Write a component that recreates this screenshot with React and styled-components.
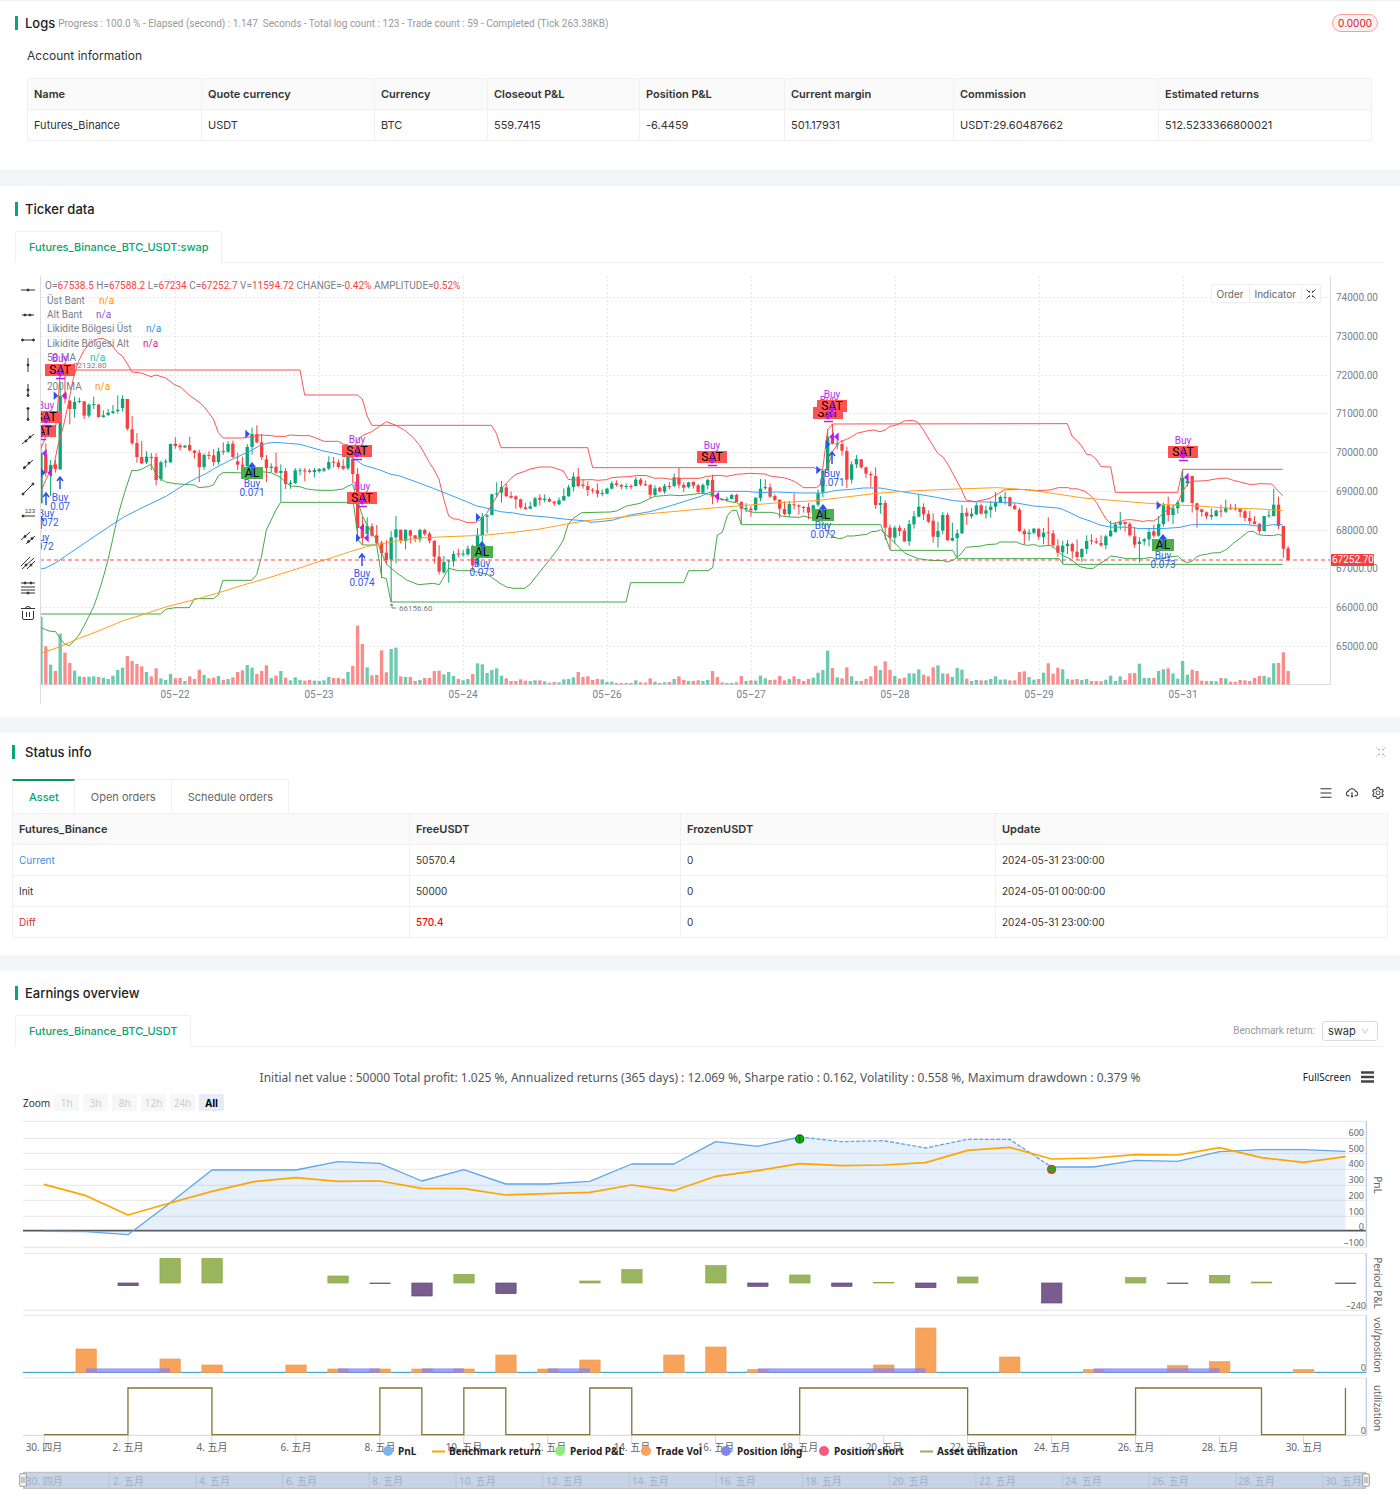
import React from "react";

import styled, { createGlobalStyle } from "styled-components";
import {
  AiOutlineMenu,
  AiOutlineCloudDownload,
  AiOutlineSetting,
  AiOutlineDown,
} from "react-icons/ai";

const GlobalStyle = createGlobalStyle`
  * {
    box-sizing: border-box;
  }

  body {
    margin: 0;
    background: #fff;
    color: #333;
    font-family: Inter, "Noto Sans CJK SC", sans-serif;
    font-size: 11px;
  }

  button,
  select {
    font: inherit;
    cursor: pointer;
  }
`;

const Page = styled.main`
  display: flex;
  flex-direction: column;
  gap: 16px;
  background: #f4f5f7;
  border-top: 1px solid #f0f0f2;
`;

const Section = styled.section`
  background: #fff;
  padding: ${(props) => props.$pad};
`;

const Header = styled.header`
  display: flex;
  align-items: center;
  height: 18px;
  padding-right: ${(props) => (props.$wide ? "0" : "7px")};

  h2 {
    margin: 0 3px 0 0;
    border-left: 3px solid #0ba678;
    padding-left: ${(props) => (props.$wide ? "10px" : "7px")};
    font-size: 13px;
    line-height: 14px;
    font-weight: 500;
    color: #222;
  }

  p {
    margin: 0;
    flex: 1;
    font-family: Roboto, sans-serif;
    font-size: 10px;
    color: #999;
    white-space: pre;
  }
`;

const Tag = styled.span`
  border: 1px solid #ff9f9c;
  border-radius: 9px;
  background: #fff1f0;
  color: #cf1322;
  font-size: 10px;
  line-height: 16px;
  padding: 0 5px;
`;

const SubTitle = styled.h3`
  margin: 14px 12px 12px;
  font-size: 12px;
  line-height: 20px;
  font-weight: 400;
`;

const TableWrap = styled.div`
  margin: ${(props) => props.$margin || "0"};
`;

const Table = styled.table`
  width: 100%;
  table-layout: fixed;
  border-collapse: collapse;
  font-size: ${(props) => (props.$small ? "10px" : "11px")};

  th,
  td {
    height: 31px;
    padding: 0 6px;
    text-align: left;
    border: 1px solid #f0f0f0;
  }

  th {
    background: #fafafa;
    font-size: 11px;
    font-weight: 600;
  }
`;

const Value = styled.span`
  color: ${(props) => props.$color};
  font-weight: ${(props) => (props.$strong ? 500 : 400)};
`;

const CardTabs = styled.div`
  display: flex;
  justify-content: space-between;
  margin-top: 13px;
  border-bottom: 1px solid #f0f0f0;
`;

const CardTab = styled.button`
  height: 32px;
  margin-bottom: -1px;
  padding: 0 12px 0 13px;
  border: 1px solid #f0f0f0;
  border-bottom-color: #fff;
  border-radius: 3px 3px 0 0;
  background: #fff;
  color: #08a36f;
  font-weight: 500;
`;

const LineTabs = styled.div`
  display: flex;
  margin-top: 18px;
  align-items: stretch;
  height: 34px;
`;

const LineTab = styled.button`
  border: 1px solid #f0f0f0;
  border-bottom: 0;
  border-left-width: ${(props) => (props.$active ? "1px" : "0")};
  border-top: ${(props) => (props.$active ? "2px solid #0b9468" : "1px solid #f0f0f0")};
  background: #fff;
  padding: 0 15px 0 16px;
  color: ${(props) => (props.$active ? "#08a36f" : "#666")};
  font-weight: ${(props) => (props.$active ? 500 : 400)};
`;

const IconRow = styled.div`
  display: flex;
  flex: 1;
  justify-content: flex-end;
  align-items: center;
  gap: 12px;
  padding: 0 2px 6px 0;
`;

const IconButton = styled.button`
  display: flex;
  border: 0;
  padding: 0;
  background: none;
  margin-left: ${(props) => (props.$end ? "auto" : "0")};
  color: ${(props) => props.$color || "#333"};
`;

const TickerBody = styled.div`
  position: relative;
  display: flex;
  align-items: flex-start;
  margin-top: 7px;
`;

const ToolBar = styled.div`
  display: flex;
  flex-direction: column;
  width: 25px;
  height: 347px;
  margin-top: 8px;

  button {
    flex: 1;
    display: flex;
    align-items: center;
    justify-content: center;
    border: 0;
    padding: 0;
    background: none;
  }
`;

const Chart = styled.svg`
  display: block;
  flex: 1;
  min-width: 0;
  width: 100%;
  margin-top: ${(props) => props.$top || "0"};
`;

const ChartMenu = styled.div`
  position: absolute;
  top: 14px;
  right: 64px;
  display: flex;
  height: 19px;
  border: 1px solid #eee;
  border-radius: 2px;
  background: #fff;

  button {
    display: flex;
    align-items: center;
    border: 0;
    border-right: 1px solid #eee;
    background: none;
    padding: 0 5px;
    font-size: 10px;
    line-height: 14px;
    color: #666;
  }

  button:last-child {
    border-right: 0;
    padding: 0 3px;
    color: #444;
  }
`;

const Benchmark = styled.label`
  display: flex;
  align-items: center;
  gap: 7px;
  padding-right: 7px;
  font-family: Roboto, sans-serif;
  font-size: 10px;
  color: #999;
`;

const SelectBox = styled.span`
  display: flex;
  align-items: center;
  width: 56px;
  height: 20px;
  border: 1px solid #d9d9d9;
  border-radius: 3px;
  padding-right: 7px;
  color: #bbb;

  select {
    appearance: none;
    flex: 1;
    min-width: 0;
    border: 0;
    padding: 0 0 0 5px;
    background: none;
    font-family: Inter, sans-serif;
    font-size: 11px;
    color: #333;
  }
`;

const TitleRow = styled.div`
  display: grid;
  grid-template-columns: 1fr auto 1fr;
  align-items: center;
  height: 24px;
  margin-top: 18px;
  font-family: "Noto Sans", sans-serif;
  color: #555;

  p {
    grid-column: 2;
    margin: 0;
    font-size: 12px;
  }
`;

const TitleActions = styled.div`
  display: flex;
  justify-content: flex-end;
  align-items: center;
  gap: 10px;
  padding-right: 11px;

  button {
    display: flex;
    border: 0;
    padding: 0;
    background: none;
    color: #222;
    font-size: 10px;
  }
`;

const ZoomRow = styled.div`
  display: flex;
  align-items: center;
  height: 17px;
  margin-top: 5px;
  padding-left: 8px;
  gap: 4px;
  font-family: "Noto Sans", sans-serif;
  font-size: 10px;

  button {
    width: 25px;
    height: 17px;
    border: 0;
    padding: 0;
    border-radius: 1px;
    background: #f7f7f7;
    color: #ccc;
  }

  button:last-child {
    background: #e6ebf5;
    color: #000;
    font-weight: 700;
  }
`;

const account = [
  ["Name", "Futures_Binance", 174],
  ["Quote currency", "USDT", 173],
  ["Currency", "BTC", 113],
  ["Closeout P&L", "559.7415", 152],
  ["Position P&L", "-6.4459", 145],
  ["Current margin", "501.17931", 169],
  ["Commission", "USDT:29.60487662", 205],
  ["Estimated returns", "512.5233366800021", 213],
];

const assets = [
  ["Current", "50570.4", "0", "2024-05-31 23:00:00", "#3a8ee6", "#333"],
  ["Init", "50000", "0", "2024-05-01 00:00:00", "#333", "#333"],
  ["Diff", "570.4", "0", "2024-05-31 23:00:00", "#d6302a", "#f00a0a"],
];

// direction, high, body top, body bottom, low, volume top (thirds of a pixel)
const candleData = `
g520 550 700 700 1040,r520 555 608 620 1129,g570 585 605 678 1184,r570 583 597 608 1203,g340 378 598 600 1091,r310 370 385 400 1148,
r390 392 417 463 1179,g380 396 417 443 1202,g383 393 396 400 1219,r393 394 437 447 1221,g400 404 437 443 1220,g380 402 405 417 1219,
r402 404 441 443 1221,g421 436 441 443 1223,g417 428 435 438 1227,g405 424 429 432 1217,g376 419 423 430 1200,g376 387 414 424 1193,
r387 387 476 482 1158,r438 478 520 524 1173,r489 519 561 578 1182,r513 561 580 582 1189,g544 560 577 582 1206,r549 561 564 600 1219,
r549 561 630 646 1195,g572 577 627 634 1225,g567 574 577 592 1230,g521 522 577 578 1212,r502 521 528 536 1225,r520 526 532 542 1224,
g525 527 532 534 1233,r500 525 541 544 1219,r540 542 549 566 1227,r540 548 591 636 1199,g550 555 591 600 1215,r544 555 558 568 1225,
r537 556 576 588 1223,g533 544 576 584 1218,r517 543 546 555 1230,g514 522 545 549 1227,r512 521 561 565 1222,r549 574 584 600 1206,
r560 584 590 596 1201,g522 531 588 592 1185,g473 492 531 554 1193,r466 492 517 520 1212,r491 517 561 570 1203,r555 568 594 636 1186,
g580 590 594 606 1224,r547 590 608 611 1217,g583 603 609 695 1203,r594 603 642 657 1223,g630 638 642 656 1231,g594 601 639 642 1222,
g594 601 604 616 1230,r594 601 604 634 1232,r596 602 606 610 1230,g594 600 606 622 1232,g594 597 604 608 1233,g592 596 602 606 1231,
g559 576 596 600 1221,r561 575 578 592 1224,r568 577 591 596 1224,r568 588 596 601 1226,g540 555 595 600 1206,r560 566 612 640 1188,
r594 612 774 800 1067,r740 774 804 825 1122,g742 768 792 797 1192,r760 769 797 800 1216,r765 796 820 825 1215,r812 818 850 924 1141,
r810 848 870 884 1207,g783 802 869 996 1137,g738 778 802 880 1133,r779 779 812 820 1219,g779 779 813 838 1221,r779 781 797 820 1221,
r795 796 806 816 1233,g776 780 808 817 1230,r776 780 792 797 1224,r785 791 812 820 1224,r810 813 860 880 1203,r825 860 905 914 1202,
g858 876 907 911 1213,g870 872 875 938 1206,g843 852 874 890 1218,r836 850 853 862 1227,g840 851 854 860 1231,g826 836 853 858 1227,
r824 862 886 900 1212,g774 794 884 890 1180,g729 741 795 830 1183,g732 736 740 790 1209,g671 673 735 736 1200,g637 670 673 683 1195,
g633 651 668 698 1217,r640 652 679 680 1225,r664 678 683 686 1233,r676 679 688 716 1233,r686 688 712 716 1228,r699 712 717 719 1232,
g695 709 716 717 1233,g681 685 709 712 1231,r673 683 690 706 1231,g673 686 690 697 1234,r682 687 695 697 1238,r692 695 700 708 1236,
g682 691 703 706 1237,g655 678 691 693 1228,g644 652 679 680 1227,g607 620 651 664 1222,r594 620 648 652 1206,r628 644 648 656 1221,
r634 648 660 678 1219,r654 659 662 670 1230,r640 661 671 682 1227,g658 669 672 679 1228,g653 656 671 673 1236,g634 640 656 658 1235,
r631 640 645 650 1239,r641 645 650 658 1239,g640 648 651 658 1239,r643 648 650 658 1239,g620 629 648 650 1231,r624 629 643 648 1237,
r631 643 646 648 1238,r642 645 674 684 1225,g646 655 675 678 1235,r650 653 664 668 1239,g642 648 665 671 1237,r636 648 651 658 1236,
g610 622 648 652 1227,r594 623 644 655 1219,r637 645 653 666 1230,g636 637 651 655 1233,r634 636 647 656 1233,r642 646 666 670 1231,
g640 645 668 672 1233,g626 630 646 658 1230,r614 630 680 703 1203,r670 680 686 698 1221,r686 687 689 693 1237,g680 687 690 695 1239,
g672 675 687 688 1239,r672 675 696 696 1237,r694 696 716 762 1218,g700 714 717 726 1233,r708 716 721 740 1231,g682 683 720 724 1232,
g627 656 684 694 1217,g628 651 655 659 1225,r640 652 680 684 1230,r673 678 690 694 1229,r687 690 716 744 1218,r694 717 732 736 1231,
g692 702 732 740 1227,r670 703 706 718 1219,r703 706 710 734 1227,r708 711 714 728 1233,r699 711 728 748 1227,g704 706 730 736 1223,
g658 670 704 710 1208,g598 602 667 682 1200,g478 500 598 602 1142,r462 500 522 523 1194,g500 520 524 538 1222,r510 522 542 557 1225,
r530 543 629 654 1192,g574 583 629 641 1219,g555 567 583 594 1233,r567 568 592 596 1233,r590 592 611 624 1227,r604 612 616 652 1219,
r592 618 705 717 1188,g678 699 705 731 1200,r690 699 773 810 1174,r764 773 803 838 1200,g768 773 803 821 1218,r765 773 783 798 1226,
r774 782 814 816 1223,g750 762 814 827 1210,g723 739 763 776 1210,g673 710 740 742 1198,r700 711 733 750 1214,r721 732 755 760 1219,
r730 752 800 818 1192,g755 783 801 833 1186,g726 735 782 793 1210,r728 735 811 812 1211,g758 804 812 814 1221,g778 790 804 862 1194,
g705 729 790 792 1199,r713 728 739 764 1226,g714 731 739 746 1233,g698 706 733 736 1230,r701 706 731 734 1231,g707 721 731 746 1231,
g694 710 720 743 1227,g666 697 710 725 1219,g676 681 698 700 1229,g666 681 684 704 1228,r680 682 708 711 1231,r699 707 717 720 1231,
r713 719 783 786 1206,r776 783 793 823 1204,g778 788 792 812 1221,g774 776 788 793 1229,r773 777 800 810 1227,g774 788 801 823 1208,
r742 787 790 825 1180,r780 790 826 830 1211,r808 827 848 860 1193,g812 827 847 883 1198,g810 821 828 852 1227,r818 822 844 865 1229,
r808 845 861 870 1227,g835 837 861 876 1230,g796 813 837 852 1227,r793 811 814 824 1233,r804 814 818 822 1233,r796 819 826 830 1234,
g794 799 826 838 1229,g752 782 799 800 1217,g756 763 786 788 1233,g726 756 764 780 1219,r755 756 762 785 1230,r756 762 796 800 1210,
r771 799 824 833 1209,g802 815 822 878 1181,g804 808 814 826 1224,g776 786 808 829 1224,r764 784 797 803 1224,g738 762 797 800 1203,
g698 706 762 770 1198,r680 706 735 754 1195,g703 715 735 762 1210,g692 697 715 731 1226,g597 623 696 698 1173,g610 632 640 650 1214,
r617 618 699 728 1199,r698 700 720 773 1203,r716 718 726 740 1232,r724 727 739 748 1233,g715 735 740 749 1233,g719 722 738 741 1234,
r704 722 725 742 1224,g689 713 725 729 1225,r702 715 717 720 1235,r702 715 718 722 1236,r715 716 726 741 1230,r720 724 744 753 1231,
r723 744 753 764 1233,r738 754 762 763 1224,r758 762 783 792 1218,g738 738 783 785 1218,g721 736 739 743 1222,g656 704 738 740 1180,
r680 704 768 777 1179,r768 768 836 864 1147,r828 835 870 872 1203`;

const candles = candleData.split(",").map((row) => {
  const text = row.trim();
  return [text[0] === "g", ...text.slice(1).split(" ").map(Number)];
});

const lines = [
  {
    color: "#ff5252",
    points:
      "123,535 137,500 151,490 166,480 172,420 180,318 194,312 225,300 900,300 914,375 1072,375 1087,387 1101,437 1115,466 1474,466 1489,490 1503,533 1763,533 1778,593 2442,593 2454,598 2468,598 2483,480 2497,462 3202,461 3216,498 3231,512 3245,528 3260,553 3274,555 3288,567 3303,590 3332,591 3346,667 3533,667 3548,598 3848,598",
  },
  {
    color: "#ff5252",
    points:
      "123,665 137,630 151,605 162,585 175,520 190,470 205,400 220,325 235,275 250,245 265,225 280,213 295,206 310,206 325,213 339,230 353,248 367,258 381,280 396,306 424,309 440,315 453,320 468,315 497,324 525,345 540,350 568,376 597,396 612,410 626,428 640,447 655,488 669,504 727,504 755,500 784,495 813,497 828,499 856,499 871,495 900,497 928,497 943,502 972,514 1015,514 1029,522 1044,525 1058,545 1072,510 1087,497 1115,485 1159,455 1188,466 1216,482 1240,503 1260,527 1288,577 1303,600 1317,628 1332,690 1346,738 1360,746 1375,748 1390,754 1404,758 1425,758 1440,750 1460,730 1475,705 1490,680 1504,655 1520,640 1533,625 1548,613 1577,603 1590,597 1620,591 1655,591 1690,603 1705,628 1720,630 1778,629 1792,631 1820,629 1835,623 1860,621 1890,620 1910,616 1940,617 1965,625 1985,624 2000,626 2012,628 2025,625 2100,625 2120,619 2160,616 2180,619 2210,613 2250,610 2295,612 2310,618 2355,624 2370,629 2383,634 2400,645 2410,653 2450,653 2460,645 2475,610 2490,570 2500,540 2520,515 2540,508 2555,500 2570,490 2600,483 2620,480 2640,485 2655,480 2670,469 2690,465 2700,460 2712,453 2740,451 2755,458 2770,480 2813,550 2830,562 2845,585 2885,660 2898,690 2925,695 2950,690 2970,685 3000,668 3012,660 3050,658 3085,659 3110,662 3150,660 3175,653 3205,653 3215,657 3230,656 3255,664 3275,680 3290,698 3305,725 3318,747 3333,762 3350,758 3375,750 3390,749 3410,751 3430,755 3440,752 3460,753 3475,745 3490,728 3518,712 3535,695 3550,660 3565,640 3575,634 3620,632 3645,627 3680,624 3700,631 3725,637 3748,643 3765,643 3780,641 3815,642 3832,660 3848,677",
  },
  {
    color: "#43a847",
    points:
      "120,1032 482,1032 497,1018 525,1013 568,1013 583,986 640,986 655,975 669,931 755,931 770,914 784,862 799,780 828,720 842,697 1060,697 1075,810 1087,825 1130,825 1145,922 1159,926 1173,996 1878,996 1892,938 2051,938 2066,902 2124,902 2138,893 2152,795 2167,787 2182,737 2196,721 2210,721 2224,764 2642,764 2656,800 2671,841 2858,841 2872,866 3178,866 3190,883 3848,883",
  },
  {
    color: "#43a847",
    points:
      "123,1073 137,1079 151,1084 166,1084 180,1105 194,1122 208,1127 220,1115 237,1095 252,1068 266,1040 281,1010 295,970 309,925 324,870 338,808 353,740 367,690 381,645 396,601 410,602 424,598 439,590 453,583 468,612 482,627 497,636 525,641 568,644 583,645 597,653 626,650 640,645 655,618 669,608 712,608 755,612 784,605 813,608 842,622 856,636 871,648 900,650 920,657 957,661 1000,661 1029,657 1044,648 1058,643 1072,690 1087,737 1101,765 1130,810 1145,850 1160,883 1188,907 1220,930 1255,944 1300,940 1318,944 1332,920 1346,895 1375,902 1415,902 1430,906 1460,912 1475,922 1500,940 1520,951 1540,955 1573,955 1590,943 1620,905 1650,868 1675,835 1690,810 1705,762 1720,745 1745,728 1830,726 1850,723 1880,708 1920,700 1945,688 1965,679 1990,677 2010,675 2040,677 2080,673 2100,670 2140,674 2160,685 2190,695 2210,698 2225,710 2240,722 2260,727 2310,727 2330,730 2345,738 2370,741 2400,742 2410,738 2430,743 2450,745 2468,755 2480,785 2500,800 2515,806 2530,804 2540,798 2560,798 2600,793 2615,785 2630,784 2642,779 2660,795 2690,825 2715,850 2755,866 2790,871 2830,872 2842,876 2860,870 2880,855 2898,832 2945,828 2960,824 2990,822 3000,816 3050,816 3060,821 3080,826 3105,824 3115,829 3150,826 3165,835 3185,855 3210,866 3240,890 3262,895 3280,895 3300,880 3318,870 3332,858 3360,862 3380,866 3430,866 3450,862 3475,868 3500,862 3533,858 3548,872 3563,878 3578,872 3590,860 3605,855 3620,853 3635,849 3660,848 3680,838 3700,820 3720,805 3745,785 3760,784 3775,794 3790,796 3820,797 3835,793 3848,797",
  },
  {
    color: "#3b9ff0",
    points:
      "123,897 137,894 170,877 194,860 250,822 300,788 350,755 370,742 425,714 500,678 550,646 590,624 620,610 640,597 690,571 755,541 775,529 800,520 825,517 865,520 900,523 925,530 970,543 1000,549 1050,560 1072,573 1090,585 1140,600 1170,612 1200,618 1260,640 1300,655 1350,675 1400,695 1430,708 1475,718 1500,725 1540,729 1580,736 1640,741 1700,748 1760,753 1770,757 1800,755 1840,750 1890,735 1950,725 2010,708 2060,692 2100,680 2125,668 2145,664 2240,664 2280,668 2330,666 2400,669 2470,669 2510,661 2555,658 2590,654 2640,654 2680,661 2750,672 2810,682 2860,692 2900,695 2960,696 3050,699 3100,708 3150,712 3180,715 3210,728 3240,743 3270,753 3300,765 3330,771 3390,772 3420,776 3500,775 3540,772 3570,765 3600,763 3740,764 3780,769 3820,764 3848,764",
  },
  {
    color: "#ff9f1a",
    points:
      "123,1150 180,1130 225,1110 300,1081 370,1052 440,1030 500,1010 580,990 650,970 730,945 800,925 890,897 940,880 1000,862 1050,845 1100,830 1140,822 1200,812 1260,804 1340,800 1450,796 1550,786 1620,777 1700,762 1760,752 1840,744 1950,731 2050,722 2150,713 2250,705 2340,698 2450,692 2530,682 2630,670 2730,663 2820,659 2900,656 2990,653 3050,657 3110,663 3150,669 3250,684 3350,692 3420,698 3500,704 3600,708 3660,713 3780,717 3848,722",
  },
];

const sells = [
  [41, 431, 0],
  [46, 417, 405],
  [60, 370, 358],
  [357, 451, 439],
  [362, 498, 486],
  [712, 457, 445],
  [828, 413, 400],
  [832, 406, 394],
  [1183, 452, 440],
];

const longs = [
  [252, 473],
  [482, 552],
  [823, 515],
  [1163, 545],
];

// x, arrow y (0 for none), label y, size
const buys = [
  [60, 483, 497, "0.07"],
  [46, 499, 513, "0.072"],
  [41, 523, 537, "0.072"],
  [252, 0, 483, "0.071"],
  [362, 560, 573, "0.074"],
  [482, 0, 563, "0.073"],
  [832, 458, 473, "0.071"],
  [823, 0, 525, "0.072"],
  [1163, 0, 555, "0.073"],
];

const rightMarks = [
  [161, 377],
  [123, 608],
  [736, 492],
  [1068, 804],
  [1428, 742],
  [2449, 600],
  [2477, 523],
  [3470, 706],
];

const leftMarks = [
  [199, 377],
  [156, 608],
  [140, 550],
  [1092, 773],
  [1106, 804],
  [2157, 679],
  [2502, 500],
  [2516, 500],
  [3566, 622],
];

const legend = [
  ["Üst Bant", "#ff9800", 300, 99],
  ["Alt Bant", "#9c4fd0", 314, 96],
  ["Likidite Bölgesi Üst", "#2196f3", 328, 146],
  ["Likidite Bölgesi Alt", "#e0198c", 343, 143],
  ["50 MA", "#17c4c0", 357, 90],
  ["200 MA", "#ff9800", 386, 95],
];

const quote = [
  ["O", "67538.5"],
  ["H", "67588.2"],
  ["L", "67234"],
  ["C", "67252.7"],
  ["V", "11594.72"],
  ["CHANGE", "-0.42%"],
  ["AMPLITUDE", "0.52%"],
];

const priceRows = [83, 202, 317, 433, 549, 667, 782, 898, 1015, 1132];
const dates = ["05–22", "05–23", "05–24", "05–26", "05–27", "05–28", "05–29", "05–31"];

const tools = [
  ["Line", <><path d="M1 8h14" /><circle cx="8" cy="8" r="1" /></>],
  ["Ray", <><path d="M2 8h12" /><circle cx="5" cy="8" r="1" /><circle cx="10" cy="8" r="1" /></>],
  ["Segment", <><path d="M2 8h12" /><circle cx="2.5" cy="8" r="1" /><circle cx="13.5" cy="8" r="1" /></>],
  ["Vertical line", <><path d="M8 1v14" /><circle cx="8" cy="8" r="1" /></>],
  ["Vertical ray", <><path d="M8 2v12" /><circle cx="8" cy="8" r="1" /><circle cx="8" cy="13.5" r="1" /></>],
  ["Vertical segment", <><path d="M8 2v12" /><circle cx="8" cy="2.5" r="1" /><circle cx="8" cy="13.5" r="1" /></>],
  ["Trend line", <><path d="M2 13L14 3" /><circle cx="6" cy="10" r="1" /><circle cx="10" cy="6" r="1" /></>],
  ["Trend ray", <><path d="M3 13L13 4" /><circle cx="4.5" cy="11.5" r="1" /><circle cx="9" cy="7" r="1" /></>],
  ["Trend segment", <><path d="M3 13L13 3" /><circle cx="3" cy="13" r="1" /><circle cx="13" cy="3" r="1" /></>],
  ["Price line", <><path d="M2 11h13" /><circle cx="3" cy="11" r="1" /><text x="5" y="8" fontSize="6" stroke="none" fontFamily="Liberation Sans">123</text></>],
  ["Channel", <><path d="M1 10L10 2M6 14L15 6" /><circle cx="5" cy="6.5" r="1" /><circle cx="8.5" cy="11.5" r="1" /><circle cx="12" cy="8.5" r="1" /></>],
  ["Parallel lines", <><path d="M1 11L10 2M2 14L14 3M7 14L15 6" /><circle cx="6" cy="10" r="1" /><circle cx="11" cy="10" r="1" /></>],
  ["Fibonacci", <><path d="M1 3h14M1 7h14M1 10h14M1 13h14" /><circle cx="5" cy="3" r="1" /><circle cx="11" cy="3" r="1" /><circle cx="8" cy="13" r="1" /></>],
  ["Remove", <path d="M1 3.500h14M5.500 3.500q0-2 2.500-2t2.500 2M2.500 6v7q0 1.500 1.500 1.500h8q1.500 0 1.500-1.500V6M6.500 7v5M9.500 7v5" fill="none" />],
];

const Collapse = () => (
  <svg width="12" height="12" viewBox="0 0 12 12" fill="none" stroke="currentColor">
    <path d="M1.500 1.500l3 3M4.500 3v1.500M10.500 1.500l-3 3M7.500 3v1.500M1.500 10.500l3-3M4.500 9V7.500M10.500 10.500l-3-3M7.500 9V7.500" />
  </svg>
);

const TickerChart = () => (
  <Chart viewBox="40 270 1345 435" fontFamily="Roboto, sans-serif" fontSize="10">
    <defs>
      <clipPath id="plot">
        <rect x="41" y="270" width="1290" height="435" />
      </clipPath>
    </defs>
    <g stroke="#e8e8ea" strokeDasharray="2 2">
      {priceRows.map((y) => (
        <path key={y} d={`M41 ${269.5 + Math.round(y / 3)}H1331`} />
      ))}
      {dates.map((date, i) => (
        <path key={date} d={`M${175.5 + i * 144} 276V685`} />
      ))}
    </g>
    <path d="M40.500 276V704M1330.500 276V685M41 684.500H1331" fill="none" stroke="#dcdce0" />
    <g fill="#76808f" dominantBaseline="central">
      {priceRows.map((y, i) => (
        <text key={y} x="1336" y={269 + Math.round(y / 3)}>
          {74000 - i * 1000}.00
        </text>
      ))}
      {dates.map((date, i) => (
        <text key={date} x={175 + i * 144} y="694" textAnchor="middle">
          {date}
        </text>
      ))}
      <text x="45" y="285">
        {quote.map(([name, value]) => (
          <React.Fragment key={name}>
            {name}=<tspan fill="#ff4040">{value}</tspan>{" "}
          </React.Fragment>
        ))}
      </text>
      {legend.map(([name, color, y, x]) => (
        <React.Fragment key={name}>
          <text x="47" y={y}>{name}</text>
          <text x={x} y={y} fill={color}>n/a</text>
        </React.Fragment>
      ))}
      <text x="73" y="365" fontSize="8">72132.80</text>
      <text x="399" y="608" fontSize="8">66156.60</text>
    </g>
    <path d="M390 605l2-1v4h4M390 605h3" fill="none" stroke="#7a8491" />
    <g clipPath="url(#plot)">
      <g transform="translate(0 270) scale(0.33333)">
        {candles.map(([up, high, top, bottom, low, volume], i) => {
          const x = 123 + i * 14.39;
          return (
            <g key={i} fill={up ? "#0aa678" : "#f93f3f"}>
              <rect x={x - 5} y={volume} width="10" height={1243 - volume} opacity="0.6" />
              <rect x={x - 1.5} y={high} width="3" height={low - high} />
              <rect x={x - 5} y={top} width="10" height={Math.max(bottom - top, 3)} />
            </g>
          );
        })}
        {lines.map((line, i) => (
          <polyline key={i} points={line.points} fill="none" stroke={line.color} strokeWidth="3" strokeLinejoin="round" />
        ))}
        <path d="M120 870H3990" stroke="#f44" strokeWidth="3" strokeDasharray="12 9" />
        {rightMarks.map(([x, y]) => (
          <path key={`${x}-${y}`} d={`M${x} ${y - 13}l14 13l-14 13z`} fill="#2452f5" />
        ))}
        {leftMarks.map(([x, y]) => (
          <path key={`${x}-${y}`} d={`M${x} ${y - 13}l-14 13l14 13z`} fill="#b81cf0" />
        ))}
      </g>
      {sells.map(([x, y, label]) => (
        <g key={`${x}-${y}`} textAnchor="middle" dominantBaseline="central">
          <rect x={x - 15} y={y - 6} width="30" height="12" fill="#ff5252" />
          <text x={x} y={y} fontSize="12" fill="#000">SAT</text>
          {label > 0 && <text x={x} y={label} fill="#b92cf0">Buy</text>}
          <path d={`M${x} ${y - 4}v9M${x - 4} ${y + 8.5}h9`} stroke="#b81cf0" strokeWidth="1.500" />
          <path d={`M${x - 4} ${y + 2}h8l-4 5z`} fill="#b81cf0" />
        </g>
      ))}
      {longs.map(([x, y]) => (
        <g key={x}>
          <rect x={x - 11} y={y - 6} width="22" height="12" fill="#4caf50" />
          <text x={x} y={y} fontSize="12" fill="#000" textAnchor="middle" dominantBaseline="central">AL</text>
          <path d={`M${x} ${y + 4}v-10`} stroke="#2452f5" strokeWidth="1.500" />
          <path d={`M${x - 4} ${y - 6}l4-5l4 5z`} fill="#2452f5" />
        </g>
      ))}
      {buys.map(([x, arrow, y, size]) => (
        <g key={`${x}-${y}`} fill="#3358e8" textAnchor="middle" dominantBaseline="central">
          {arrow > 0 && (
            <path d={`M${x} ${arrow + 6}v-11M${x - 3} ${arrow - 2}l3-4l3 4`} fill="none" stroke="#2452f5" strokeWidth="1.500" />
          )}
          <text x={x} y={y}>Buy</text>
          <text x={x} y={y + 9}>{size}</text>
        </g>
      ))}
    </g>
    <rect x="1331" y="554" width="43" height="12" rx="1" fill="#f23f3f" />
    <text x="1332" y="559" fill="#fff" dominantBaseline="central">67252.70</text>
  </Chart>
);

const pnl = [364, 365, 374, 279, 180, 180, 180, 155, 160, 213, 179, 222, 222, 214, 162, 162, 95, 109, 81, 95, 92, 114, 88, 88, 171, 171, 151, 154, 125, 119, 119, 124];
const bench = [223, 257, 315, 279, 244, 215, 203, 214, 213, 235, 236, 255, 251, 247, 225, 242, 199, 182, 161, 167, 165, 158, 121, 112, 147, 144, 134, 135, 113, 143, 157, 140];
const profit = [[3, 445], [4, 445], [7, 498], [10, 493], [13, 513], [14, 479], [16, 467], [18, 495], [20, 517], [22, 501], [26, 503], [28, 496], [29, 516]];
const loss = [[2, 527], [8, 521], [9, 558], [11, 551], [17, 529], [19, 529], [21, 533], [24, 579], [27, 521], [31, 521]];
const volumes = [[1, 717], [3, 747], [4, 765], [6, 765], [7, 777], [8, 777], [9, 777], [10, 777], [11, 735], [12, 777], [13, 750], [15, 735], [16, 711], [17, 779], [20, 765], [21, 654], [23, 741], [25, 779], [27, 767], [28, 755], [30, 779]];
const positions = [[1, 3], [7, 8], [9, 10], [12, 13], [17, 21], [25, 28]];
const usage = [[2, 4], [8, 9], [10, 11], [13, 14], [18, 22], [26, 29]];
const days = ["30. 四月", ...[2, 4, 6, 8, 10, 12, 14, 16, 18, 20, 22, 24, 26, 28, 30].map((d) => `${d}. 五月`)];

const px = (i) => 132 + i * 125.95;
const toPoints = (data, from = 0) => data.map((y, i) => `${px(i + from)},${y}`).join(" ");
const usagePath =
  usage.reduce((d, [from, to]) => `${d}H${px(from)}V834H${px(to)}V974`, "M132 974") + `H${px(31)}V834`;

const seriesLegend = [
  ["PnL", 388, 398, "#7cb5ec"],
  ["Benchmark return", 438, 449, "#ffa500", true],
  ["Period P&L", 560, 570, "#90ed7d"],
  ["Trade Vol", 646, 656, "#f7a35c"],
  ["Position long", 726, 737, "#8085e9"],
  ["Position short", 824, 834, "#f15c80"],
  ["Asset utilization", 926, 937, "#a8a070", true],
];

const EarningsChart = () => (
  <Chart $top="7px" viewBox="15 8 1370 378" fontFamily="Noto Sans, Noto Sans CJK SC, sans-serif" fontSize="10">
    <g transform="scale(0.33333)">
      <path
        d="M69 34H4100M69 85H4100M69 130H4100M69 178H4100M69 226H4100M69 271H4100M69 319H4100M69 412H4100M69 430H4100M69 601H4100M69 616H4100M69 804H4100"
        stroke="#e6e6e6"
        strokeWidth="3"
      />
      <path d="M69 362H4100" stroke="#555" strokeWidth="5" />
      <polygon points={`${px(0)},362 ${toPoints(pnl)} ${px(31)},362`} fill="#7cb5ec" fillOpacity="0.2" />
      <g fill="none" stroke="#62a5e8" strokeWidth="4" strokeLinejoin="round">
        <polyline points={toPoints(pnl.slice(0, 19))} />
        <polyline points={toPoints(pnl.slice(18, 25), 18)} strokeDasharray="12 5" />
        <polyline points={toPoints(pnl.slice(24), 24)} />
      </g>
      <polyline points={toPoints(bench)} fill="none" stroke="#ffa500" strokeWidth="5" strokeLinejoin="round" />
      <circle cx={px(18)} cy="87" r="12" fill="#0b0" stroke="#264" strokeWidth="4" />
      <path d={`M${px(18)} 80v14`} stroke="#031" strokeWidth="3" />
      <circle cx={px(24)} cy="178" r="12" fill="#1bb01b" stroke="#e33" strokeWidth="4" />
      <path d={`M${px(24)} 170v14`} stroke="#e33" strokeWidth="3" />
      {profit.map(([i, y]) => (
        <rect key={i} x={px(i) - 30} y={y} width="61" height={519 - y} fill="#9ab55f" stroke="#86a93f" strokeWidth="2" />
      ))}
      {loss.map(([i, y]) => (
        <rect key={i} x={px(i) - 30} y="519" width="61" height={y - 519} fill="#785d8e" stroke="#5d4380" strokeWidth="2" />
      ))}
      <path d="M69 787H4100" stroke="#2196cc" strokeWidth="3" />
      {volumes.map(([i, y]) => (
        <rect key={i} x={px(i) - 30} y={y} width="61" height={788 - y} fill="#f7a35c" stroke="#f59a4c" strokeWidth="2" />
      ))}
      {positions.map(([from, to]) => (
        <rect key={from} x={px(from)} y="775" width={px(to) - px(from)} height="14" fill="#8085e9" fillOpacity="0.75" />
      ))}
      <path d="M69 976H4100" stroke="#ccd6eb" strokeWidth="3" />
      {days.map((day, i) => (
        <path key={day} d={`M${px(i * 2)} 976v23`} stroke="#ccd6eb" strokeWidth="3" />
      ))}
      <path d={usagePath} fill="none" stroke="#857638" strokeWidth="4" />
      <path d="M4099 34V412M4099 430V601M4099 616V789M4099 804V976" stroke="#c0cfe8" strokeWidth="4" />
      <rect x="69" y="1087" width="4029" height="49" fill="#c7d3e6" />
      <path d="M69 1087H4098M69 1135H4098" stroke="#bbb" strokeWidth="3" />
      {days.slice(1).map((day, i) => (
        <path key={day} d={`M${328 + i * 260} 1089v45`} stroke="#b8c4d8" strokeWidth="3" />
      ))}
    </g>
    <g fill="#666" dominantBaseline="central">
      {[600, 500, 400, 300, 200, 100, 0, "–100"].map((label, i) => (
        <text key={label} x="1364" y={Math.round(22 + i * 15.7)} textAnchor="end" fontSize="9">
          {label}
        </text>
      ))}
      <text x="1366" y="195" textAnchor="end" fontSize="9">–240</text>
      <text x="1366" y="257" textAnchor="end" fontSize="9">0</text>
      <text x="1366" y="320" textAnchor="end" fontSize="9">0</text>
      {days.map((day, i) => (
        <text key={day} x={44 + i * 84} y="337" textAnchor="middle">
          {day}
        </text>
      ))}
      {[["PnL", 75], ["Period P&L", 173], ["vol/position", 235], ["utilization", 298]].map(([name, y]) => (
        <text key={name} transform={`translate(1378 ${y}) rotate(90)`} textAnchor="middle">
          {name}
        </text>
      ))}
    </g>
    <g fill="#a3aec0" dominantBaseline="central">
      {days.map((day, i) => (
        <text key={day} x={Math.round(26 + i * 86.6)} y="371">
          {day}
        </text>
      ))}
    </g>
    <g transform="scale(0.33333)" stroke="#999" strokeWidth="3">
      {[69, 4098].map((x) => (
        <g key={x}>
          <rect x={x - 10} y="1091" width="20" height="38" rx="3" fill="#f2f2f2" />
          <path d={`M${x - 3} 1101v18M${x + 3} 1101v18`} />
        </g>
      ))}
    </g>
    {seriesLegend.map(([name, mark, x, color, isLine]) => (
      <g key={name}>
        {isLine ? (
          <path d={`M${mark - 6} 341.500h13`} stroke={color} strokeWidth="2" />
        ) : (
          <circle cx={mark} cy="341" r="5" fill={color} />
        )}
        <text x={x} y="341" fontWeight="700" fill="#222" dominantBaseline="central">
          {name}
        </text>
      </g>
    ))}
  </Chart>
);

const App = () => {
  return (
    <>
      <GlobalStyle />
      <Page>
        <Section $pad="13px 15px 29px">
          <Header>
            <h2>Logs</h2>
            <p>
              {"Progress : 100.0 % - Elapsed (second) : 1.147  Seconds - Total log count : 123 - Trade count : 59 - Completed (Tick 263.38KB)"}
            </p>
            <Tag>0.0000</Tag>
          </Header>
          <SubTitle>Account information</SubTitle>
          <TableWrap $margin="0 13px 0 12px">
            <Table>
              <colgroup>
                {account.map((item) => (
                  <col key={item[0]} width={item[2]} />
                ))}
              </colgroup>
              <thead>
                <tr>
                  {account.map((item) => (
                    <th key={item[0]}>{item[0]}</th>
                  ))}
                </tr>
              </thead>
              <tbody>
                <tr>
                  {account.map((item) => (
                    <td key={item[0]}>{item[1]}</td>
                  ))}
                </tr>
              </tbody>
            </Table>
          </TableWrap>
        </Section>

        <Section $pad="14px 15px 12px">
          <Header>
            <h2>Ticker data</h2>
          </Header>
          <CardTabs>
            <CardTab>Futures_Binance_BTC_USDT:swap</CardTab>
          </CardTabs>
          <TickerBody>
            <ToolBar>
              {tools.map(([name, drawing]) => (
                <button key={name} aria-label={name}>
                  <svg width="16" height="16" viewBox="0 0 16 16" fill="#333" stroke="#333">
                    {drawing}
                  </svg>
                </button>
              ))}
            </ToolBar>
            <TickerChart />
            <ChartMenu>
              <button>Order</button>
              <button>Indicator</button>
              <button aria-label="Exit full screen">
                <Collapse />
              </button>
            </ChartMenu>
          </TickerBody>
        </Section>

        <Section $pad="10px 13px 17px 12px">
          <Header $wide>
            <h2>Status info</h2>
            <IconButton $end $color="#bbb" aria-label="Collapse">
              <Collapse />
            </IconButton>
          </Header>
          <LineTabs>
            <LineTab $active>Asset</LineTab>
            <LineTab>Open orders</LineTab>
            <LineTab>Schedule orders</LineTab>
            <IconRow>
              <IconButton aria-label="List">
                <AiOutlineMenu size={14} />
              </IconButton>
              <IconButton aria-label="Download">
                <AiOutlineCloudDownload size={14} />
              </IconButton>
              <IconButton aria-label="Settings">
                <AiOutlineSetting size={14} />
              </IconButton>
            </IconRow>
          </LineTabs>
          <Table $small>
            <colgroup>
              <col width="397" />
              <col width="271" />
              <col width="315" />
              <col width="392" />
            </colgroup>
            <thead>
              <tr>
                <th>Futures_Binance</th>
                <th>FreeUSDT</th>
                <th>FrozenUSDT</th>
                <th>Update</th>
              </tr>
            </thead>
            <tbody>
              {assets.map(([name, free, frozen, update, color, freeColor]) => (
                <tr key={name}>
                  <td>
                    <Value $color={color}>{name}</Value>
                  </td>
                  <td>
                    <Value $color={freeColor} $strong={name === "Diff"}>
                      {free}
                    </Value>
                  </td>
                  <td>{frozen}</td>
                  <td>{update}</td>
                </tr>
              ))}
            </tbody>
          </Table>
        </Section>

        <Section $pad="13px 15px 16px">
          <Header>
            <h2>Earnings overview</h2>
          </Header>
          <CardTabs>
            <CardTab>Futures_Binance_BTC_USDT</CardTab>
            <Benchmark htmlFor="benchmark">
              Benchmark return:
              <SelectBox>
                <select id="benchmark" defaultValue="swap">
                  <option value="swap">swap</option>
                </select>
                <AiOutlineDown size={10} />
              </SelectBox>
            </Benchmark>
          </CardTabs>
          <TitleRow>
            <p>
              Initial net value : 50000 Total profit: 1.025 %, Annualized returns (365 days) : 12.069 %, Sharpe ratio : 0.162, Volatility : 0.558 %, Maximum drawdown : 0.379 %
            </p>
            <TitleActions>
              <button>FullScreen</button>
              <button aria-label="Chart menu">
                <svg width="13" height="12" viewBox="0 0 13 12" stroke="#444" strokeWidth="2.500">
                  <path d="M0 1.500h13M0 6h13M0 10.500h13" />
                </svg>
              </button>
            </TitleActions>
          </TitleRow>
          <ZoomRow>
            <span>Zoom</span>
            {["1h", "3h", "8h", "12h", "24h", "All"].map((range) => (
              <button key={range}>{range}</button>
            ))}
          </ZoomRow>
          <EarningsChart />
        </Section>
      </Page>
    </>
  );
};

export default App;
